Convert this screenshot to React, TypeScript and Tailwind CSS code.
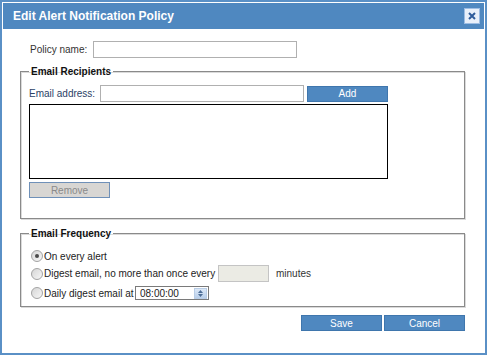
import React from "react";

function Radio({ checked }: { checked?: boolean }) {
  return (
    <span className="ml-[2px] flex h-[12px] w-[12px] shrink-0 items-center justify-center rounded-full border border-[#a3a3a3] bg-gradient-to-br from-[#d6d6d6] to-[#f7f7f7]">
      {checked && <span className="h-[4px] w-[4px] rounded-full bg-[#4a4a4a]" />}
    </span>
  );
}

function Spinner() {
  return (
    <span className="flex h-[11px] w-[13px] flex-col items-center justify-center gap-[1px] border border-[#b9cde6] bg-gradient-to-b from-[#dce8f7] to-[#b9cfea]">
      <svg width="5" height="3" viewBox="0 0 5 3">
        <path d="M0 3 L2.5 0 L5 3 Z" fill="#4d6d96" />
      </svg>
      <svg width="5" height="3" viewBox="0 0 5 3">
        <path d="M0 0 L2.5 3 L5 0 Z" fill="#4d6d96" />
      </svg>
    </span>
  );
}

export default function App() {
  const blueBtn =
    "flex h-[16px] w-[81px] items-center justify-center border border-[#3f76ad] bg-[#4f88c0] text-[10px] text-white";
  const fieldset =
    "w-[445px] border border-[#8a8a8a] px-[8px] shadow-[1px_1px_0_#dadada,inset_1px_1px_0_#dadada]";

  return (
    <div className="h-[355px] w-[487px] border-2 border-[#5a90c6] bg-white p-px font-['Liberation_Sans',Arial,sans-serif] text-[10px] text-[#333]">
      {/* title bar */}
      <div className="flex h-[26px] items-center justify-between bg-[#4f88c0] pl-[10px] pr-[4px]">
        <span className="text-[12px] font-bold text-white">Edit Alert Notification Policy</span>
        <span className="flex h-[16px] w-[16px] items-center justify-center border border-[#9dbde3] bg-[#e9f0fa]">
          <svg width="8" height="8" viewBox="0 0 8 8">
            <path d="M1 1 L7 7 M7 1 L1 7" stroke="#2f5c9b" strokeWidth="2" />
          </svg>
        </span>
      </div>

      <div className="px-[17px]">
        {/* policy name */}
        <div className="mt-[12px] flex h-[17px] items-center">
          <span className="ml-[10px] w-[63px]">Policy name:</span>
          <span className="h-[17px] w-[204px] border border-[#b0b0b0] bg-white" />
        </div>

        {/* email recipients */}
        <fieldset className={`mt-[6px] pb-[20px] ${fieldset}`}>
          <legend className="px-[2px] text-[10px] font-bold leading-[15px] text-[#111]">Email Recipients</legend>
          <div className="mt-[6px] flex h-[17px] items-center">
            <span className="w-[71px] text-[#2b4266]">Email address:</span>
            <span className="h-[17px] w-[204px] border border-[#b0b0b0] bg-white" />
            <span className={`ml-[3px] ${blueBtn}`}>Add</span>
          </div>
          <div className="mt-[2px] h-[75px] w-[359px] border border-black bg-white" />
          <div className="mt-[3px] flex h-[16px] w-[81px] items-center justify-center border border-[#6f90b8] bg-[#d8d6d3] text-[#8a8a8a]">
            Remove
          </div>
        </fieldset>

        {/* email frequency */}
        <fieldset className={`mt-[7px] pb-[6px] ${fieldset}`}>
          <legend className="px-[2px] text-[10px] font-bold leading-[15px] text-[#111]">Email Frequency</legend>
          <div className="mt-[7px] flex h-[16px] items-center">
            <Radio checked />
            <span className="ml-[1px] text-[#222]">On every alert</span>
          </div>
          <div className="mt-px flex h-[17px] items-center">
            <Radio />
            <span className="ml-[1px] w-[174px] text-[#222]">Digest email, no more than once every</span>
            <span className="h-[17px] w-[51px] border border-[#c4c4c4] bg-[#ebebe4]" />
            <span className="ml-[7px] text-[#333]">minutes</span>
          </div>
          <div className="mt-[4px] flex h-[14px] items-center">
            <Radio />
            <span className="ml-[1px] w-[91px] text-[#222]">Daily digest email at</span>
            <span className="flex h-[14px] w-[74px] items-center justify-between border border-[#7a7a7a] bg-white pl-[4px] pr-px text-[#222]">
              08:00:00
              <Spinner />
            </span>
          </div>
        </fieldset>

        {/* buttons */}
        <div className="mt-[8px] flex w-[445px] justify-end gap-[2px]">
          <span className={blueBtn}>Save</span>
          <span className={blueBtn}>Cancel</span>
        </div>
      </div>
    </div>
  );
}
